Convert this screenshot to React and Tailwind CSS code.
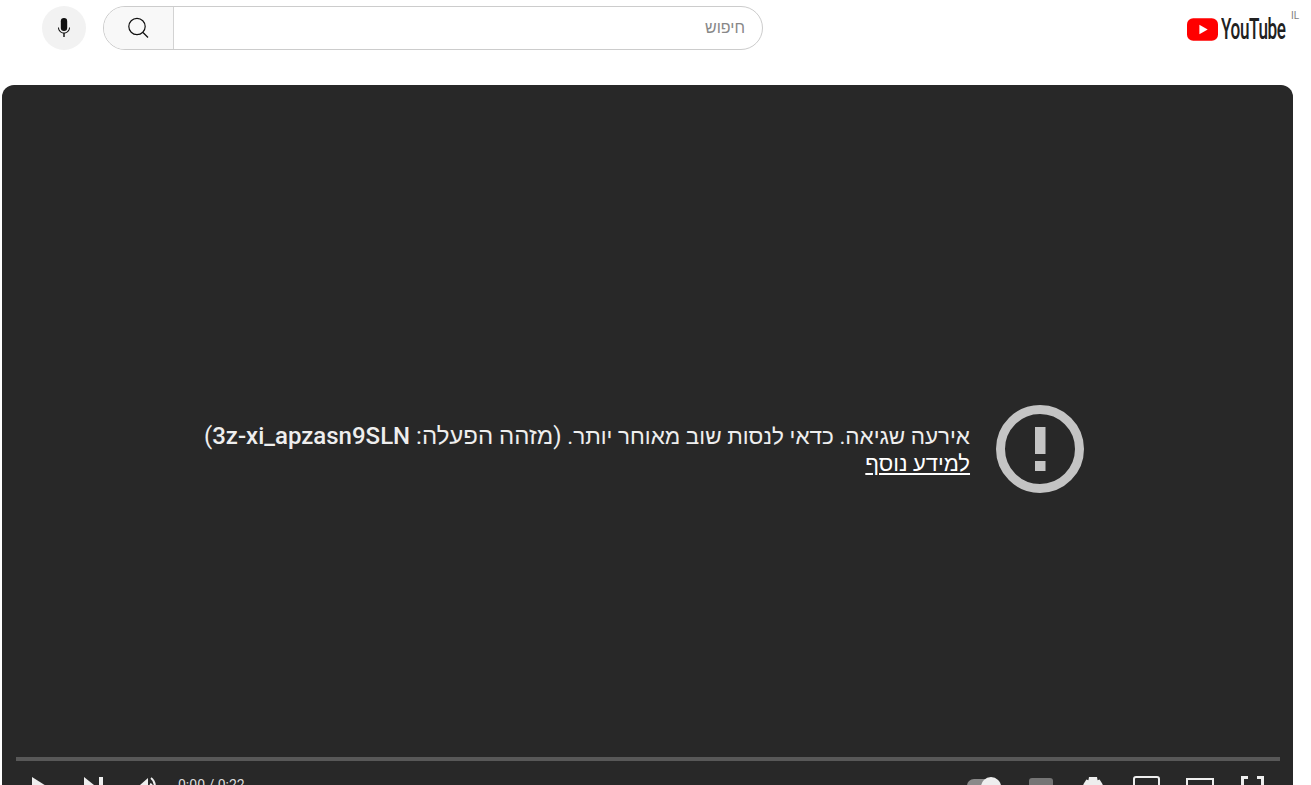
const HEBREW = "font-['Roboto','Liberation_Sans',Arial,sans-serif]";

function MicIcon() {
  return (
    <svg viewBox="0 0 24 24" className="h-6 w-6 fill-[#0f0f0f]">
      <path d="M12 15a3.2 3.2 0 0 0 3.2-3.2V5.2a3.2 3.2 0 0 0-6.4 0v6.6A3.2 3.2 0 0 0 12 15Z" />
      <path d="M18 11.5h-1c0 2.9-2.2 5-5 5s-5-2.1-5-5H6c0 3.2 2.4 5.6 5.3 5.9V21h1.4v-3.6c2.9-.3 5.3-2.7 5.3-5.9Z" />
    </svg>
  );
}

function SearchIcon() {
  return (
    <svg viewBox="0 0 24 24" className="mr-[2px] h-6 w-6 fill-none stroke-[#0f0f0f] stroke-[1.2]">
      <circle cx="11" cy="10.5" r="8.2" />
      <path d="m17 16.5 5 5" />
    </svg>
  );
}

function Logo() {
  return (
    <div className="flex items-center">
      <svg viewBox="0 0 30 22" className="h-[23px] w-[31px]">
        <rect x="0" y="0" width="30" height="22" rx="6" fill="#ff0000" />
        <path d="M12 6.5 20 11l-8 4.5Z" fill="#fff" />
      </svg>
      <span className="ml-[3px] w-[65px] origin-left scale-x-[0.59] whitespace-nowrap font-['Roboto',sans-serif] text-[29px] leading-[24px] font-medium tracking-[-0.6px] text-[#212121]">
        YouTube
      </span>
    </div>
  );
}

function ErrorIcon() {
  return (
    <svg viewBox="0 0 88 88" className="h-[88px] w-[88px] shrink-0">
      <circle cx="44" cy="44" r="39.5" fill="none" stroke="#c4c4c4" strokeWidth="9" />
      <rect x="39" y="22" width="10.5" height="27" fill="#c4c4c4" />
      <rect x="39" y="56" width="10.5" height="10" fill="#c4c4c4" />
    </svg>
  );
}

function PlayerControls() {
  return (
    <div className="flex h-[52px] items-start justify-between pt-[15px] pl-[28px] pr-[29px]">
      <div className="flex items-start">
        <svg viewBox="0 0 22 26" className="h-[26px] w-[22px] fill-[#eeeeee]">
          <path d="M2 1 21 13 2 25Z" />
        </svg>
        <svg viewBox="0 0 22 26" className="ml-[30px] h-[26px] w-[22px] fill-[#eeeeee]">
          <path d="M2 1 17 13 2 25Z" />
          <rect x="17" y="1" width="4" height="24" />
        </svg>
        <svg viewBox="0 0 24 26" className="ml-[30px] h-[26px] w-[24px]">
          <path d="M1 9h5l8-7v22l-8-7H1Z" fill="#eeeeee" />
          <path d="M16 8c2 1 3 3 3 5M17 2c3 2 4 6 4 10" fill="none" stroke="#eeeeee" strokeWidth="2" />
        </svg>
        <span className="ml-[20px] -mt-[1px] font-['Roboto',sans-serif] text-[14px] leading-[20px] text-[#dddddd]">
          0:00 / 0:22
        </span>
      </div>
      <div className="flex items-start">
        <div className="relative mt-[3px] h-[14px] w-[34px] rounded-full bg-[#8a8a8a]">
          <div className="absolute -top-[2px] right-0 h-[20px] w-[20px] rounded-full bg-[#eeeeee]" />
        </div>
        <div className="ml-[28px] mt-[2px] h-[20px] w-[24px] rounded-[3px] bg-[#757575]" />
        <svg viewBox="0 0 24 24" className="ml-[28px] h-[24px] w-[24px] fill-[#eeeeee]">
          <path d="M8 1h8l.6 3.2 2-.8 3.2 5.2-1.9 1.6v3.6l1.9 1.6-3.2 5.2-2-.8L16 23H8l-.6-3.2-2 .8-3.2-5.2 1.9-1.6v-3.6L2.2 8.6l3.2-5.2 2 .8Z" />
        </svg>
        <div className="ml-[28px] h-[24px] w-[27px] rounded-[3px] border-2 border-[#eeeeee]" />
        <div className="ml-[26px] mt-[2px] h-[22px] w-[28px] border-2 border-[#eeeeee]" />
        <div className="relative ml-[27px] h-[24px] w-[23px]">
          <div className="absolute top-0 left-0 h-[10px] w-[7px] border-t-[3px] border-l-[3px] border-[#eeeeee]" />
          <div className="absolute top-0 right-0 h-[10px] w-[7px] border-t-[3px] border-r-[3px] border-[#eeeeee]" />
        </div>
      </div>
    </div>
  );
}

export default function App() {
  return (
    <div className="h-[785px] overflow-hidden bg-white" dir="ltr">
      <header className="relative flex h-[85px] items-start pt-[6px] pl-[42px]">
        <button className="flex h-11 w-11 items-center justify-center rounded-full bg-[#f2f2f2]">
          <MicIcon />
        </button>
        <div className="ml-[17px] flex h-11 w-[660px] overflow-hidden rounded-full border border-[#cccccc]">
          <button className="flex w-[70px] items-center justify-center border-r border-[#d3d3d3] bg-[#f8f8f8]">
            <SearchIcon />
          </button>
          <div
            dir="rtl"
            className={`flex flex-1 items-center pr-[17px] text-[16px] text-[#888888] ${HEBREW}`}
          >
            חיפוש
          </div>
        </div>
        <div className="ml-auto mr-[25px] mt-[11px]">
          <Logo />
        </div>
        <span className="absolute left-[1291px] top-[10px] font-['Roboto',sans-serif] text-[10px] leading-[12px] text-[#808080]">
          IL
        </span>
      </header>

      <main className="ml-[2px] flex h-[728px] w-[1291px] flex-col rounded-t-xl bg-[#282828]">
        <div className="flex flex-1 items-center justify-center pt-[56px] pr-[7px]">
          <div dir="rtl" className="flex items-center gap-[26px]">
            <ErrorIcon />
            <div className={`pt-[2px] text-[22.5px] leading-[27px] text-[#eeeeee] ${HEBREW}`}>
              <div>
                אירעה שגיאה. כדאי לנסות שוב מאוחר יותר.{" "}
                <span className="text-[24px]">(מזהה הפעלה: </span>
                <span dir="ltr" className="text-[24px] font-medium">
                  3z-xi_apzasn9SLN
                </span>
                <span className="text-[24px]">)</span>
              </div>
              <a className="text-[22px] text-white underline">למידע נוסף</a>
            </div>
          </div>
        </div>
        <div className="ml-[14px] mr-[13px] h-[4px] bg-[#585858]" />
        <PlayerControls />
      </main>
    </div>
  );
}
